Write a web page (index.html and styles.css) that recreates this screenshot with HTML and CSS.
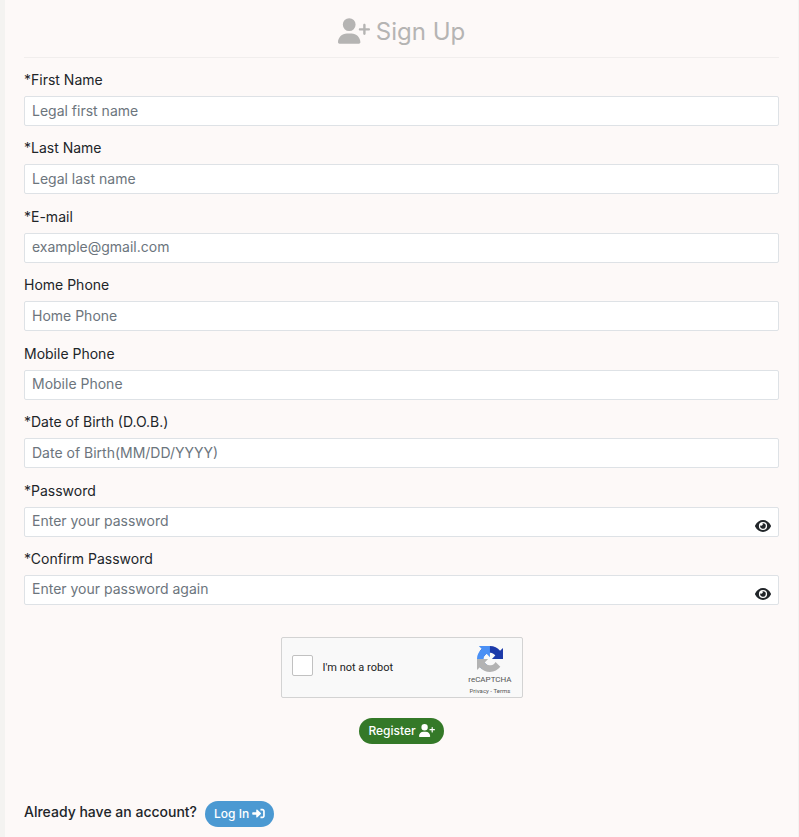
FILE: index.html
```html
<!DOCTYPE html>
<html lang="en">
<head>
  <meta charset="UTF-8">
  <meta name="viewport" content="width=device-width, initial-scale=1.0">
  <title>Sign Up</title>
  <link rel="stylesheet" href="styles.css">
</head>
<body>

  <!-- shared icons -->
  <svg class="sprite" aria-hidden="true">
    <symbol id="user-plus" viewBox="0 0 640 512">
      <path d="M96 128a128 128 0 1 1 256 0A128 128 0 1 1 96 128zM0 482.3C0 383.8 79.8 304 178.3 304h91.4C368.2 304 448 383.8 448 482.3c0 16.4-13.3 29.7-29.7 29.7H29.7C13.3 512 0 498.7 0 482.3zM504 312V248H440c-13.3 0-24-10.7-24-24s10.7-24 24-24h64V136c0-13.3 10.7-24 24-24s24 10.7 24 24v64h64c13.3 0 24 10.7 24 24s-10.7 24-24 24H552v64c0 13.3-10.7 24-24 24s-24-10.7-24-24z"/>
    </symbol>
    <symbol id="eye" viewBox="0 0 576 512">
      <path fill-rule="evenodd" d="M288 40C175 40 70 110 8 228c-10 18-10 38 0 56 62 118 167 188 280 188s218-70 280-188c10-18 10-38 0-56C506 110 401 40 288 40zm0 364a148 148 0 1 1 0-296 148 148 0 0 1 0 296z"/>
      <path d="M288 156a100 100 0 0 0-24 3 50 50 0 0 1-72 70 100 100 0 1 0 96-73z"/>
    </symbol>
  </svg>

  <main class="panel">
    <h1 class="title">
      <svg class="title-icon"><use href="#user-plus"/></svg>
      Sign Up
    </h1>

    <form class="form">
      <div class="fields">
        <div class="field">
          <label for="firstName">*First Name</label>
          <input type="text" id="firstName" placeholder="Legal first name">
        </div>
        <div class="field">
          <label for="lastName">*Last Name</label>
          <input type="text" id="lastName" placeholder="Legal last name">
        </div>
        <div class="field">
          <label for="email">*E-mail</label>
          <input type="email" id="email" placeholder="example@gmail.com">
        </div>
        <div class="field">
          <label for="homePhone">Home Phone</label>
          <input type="tel" id="homePhone" placeholder="Home Phone">
        </div>
        <div class="field">
          <label for="mobilePhone">Mobile Phone</label>
          <input type="tel" id="mobilePhone" placeholder="Mobile Phone">
        </div>
        <div class="field">
          <label for="dob">*Date of Birth (D.O.B.)</label>
          <input type="text" id="dob" placeholder="Date of Birth(MM/DD/YYYY)">
        </div>
        <div class="field">
          <label for="password">*Password</label>
          <input type="password" id="password" placeholder="Enter your password">
          <button type="button" class="toggle" aria-label="Show password"><svg><use href="#eye"/></svg></button>
        </div>
        <div class="field">
          <label for="confirm">*Confirm Password</label>
          <input type="password" id="confirm" placeholder="Enter your password again">
          <button type="button" class="toggle" aria-label="Show password"><svg><use href="#eye"/></svg></button>
        </div>
      </div>

      <div class="captcha">
        <input type="checkbox" id="robot">
        <label for="robot">I'm not a robot</label>
        <div class="captcha-brand">
          <svg class="captcha-logo" viewBox="0 0 64 64">
            <path fill="#1c3aa9" d="M64 31.955l-.033-1.37V4.687l-7.16 7.16C50.948 4.674 42.033.093 32.05.093c-10.4 0-19.622 4.96-25.458 12.64l11.736 11.86a15.55 15.55 0 0 1 4.754-5.334c2.05-1.6 4.952-2.906 8.968-2.906.485 0 .86.057 1.135.163 4.976.393 9.288 3.14 11.828 7.124l-8.307 8.307L64 31.953"/>
            <path fill="#4a90f5" d="M31.862.094l-1.37.033H4.594l7.16 7.16C4.58 13.147 0 22.06 0 32.046c0 10.4 4.96 19.622 12.64 25.458L24.5 45.768a15.55 15.55 0 0 1-5.334-4.754c-1.6-2.05-2.906-4.952-2.906-8.968 0-.485.057-.86.163-1.135.393-4.976 3.14-9.288 7.124-11.828l8.307 8.307L31.86.095"/>
            <path fill="#b3b3b3" d="M.001 32.045l.033 1.37v25.898l7.16-7.16c5.86 7.173 14.774 11.754 24.76 11.754 10.4 0 19.622-4.96 25.458-12.64l-11.736-11.86a15.55 15.55 0 0 1-4.754 5.334c-2.05 1.6-4.952 2.906-8.968 2.906-.485 0-.86-.057-1.135-.163-4.976-.393-9.288-3.14-11.828-7.124l8.307-8.307L0 32.045"/>
          </svg>
          <span class="captcha-name">reCAPTCHA</span>
          <span class="captcha-links"><a href="#">Privacy</a> - <a href="#">Terms</a></span>
        </div>
      </div>

      <button type="submit" class="pill register">
        Register
        <svg class="register-icon"><use href="#user-plus"/></svg>
      </button>
    </form>

    <div class="login">
      <span>Already have an account?</span>
      <a href="#" class="pill login-link">
        Log In
        <svg class="login-icon" viewBox="0 0 512 448">
          <path d="M336 32h80c53 0 96 43 96 96v192c0 53-43 96-96 96h-80v-68h72c22 0 36-14 36-36V136c0-22-14-36-36-36h-72z"/>
          <path d="M201 65l150 142c10 9 10 25 0 34L201 383c-15 14-37 5-37-17v-96H28c-16 0-28-12-28-28v-36c0-16 12-28 28-28h136V82c0-22 22-31 37-17z"/>
        </svg>
      </a>
    </div>
  </main>

</body>
</html>
```
FILE: styles.css
```css
* {
  box-sizing: border-box;
}
body {
  margin: 0;
  min-height: 100vh;
  display: flex;
  padding: 0 1px 0 5px;
  background-color: #f4f3f1;
  font-family: Inter, "Liberation Sans", sans-serif;
  font-size: 14px;
  color: #212529;
}
svg {
  fill: currentColor;
}
.sprite {
  display: none;
}
.panel {
  flex: 1;
  display: flex;
  flex-direction: column;
  padding: 6px 19px 10px;
  background-color: #fdf9f8;
}
.title {
  display: flex;
  align-items: center;
  justify-content: center;
  gap: 6px;
  height: 52px;
  margin: 0 0 12px;
  border-bottom: 1px solid #f1eeed;
  font-size: 24px;
  font-weight: 400;
  color: #b5b4b3;
}
.title-icon {
  width: 32px;
  height: 26px;
  margin-bottom: 2px;
}
.form {
  flex: 1;
  display: flex;
  flex-direction: column;
  align-items: center;
}
.fields {
  flex: 1;
  align-self: stretch;
  display: flex;
  flex-direction: column;
  justify-content: space-between;
}
.field {
  position: relative;
}
.field label {
  display: block;
  line-height: 20px;
  margin-bottom: 6px;
}
.field input {
  display: block;
  width: 100%;
  height: 30px;
  padding: 0 7px 2px;
  border: 1px solid #dee2e6;
  border-radius: 2px;
  background-color: #fff;
  font: inherit;
  color: #212529;
}
.field input::placeholder {
  color: #6c757d;
  opacity: 1;
}
/* eye button sits over the input */
.toggle {
  position: absolute;
  right: 8px;
  bottom: 3px;
  display: flex;
  padding: 0;
  border: none;
  background: none;
  color: #212529;
  cursor: pointer;
}
.toggle svg {
  width: 16px;
  height: 16px;
}
.captcha {
  display: flex;
  align-items: center;
  gap: 10px;
  width: 242px;
  height: 61px;
  margin: 32px 0 20px;
  padding: 0 10px;
  border: 1px solid #d3d3d3;
  border-radius: 2px;
  background-color: #f9f9f9;
  font-family: Roboto, sans-serif;
  font-size: 11px;
  color: #222;
}
.captcha input {
  appearance: none;
  width: 21px;
  height: 21px;
  margin: 0 0 4px;
  border: 1px solid #c1c1c1;
  border-radius: 2px;
  background-color: #fff;
}
.captcha-brand {
  display: flex;
  flex-direction: column;
  align-items: center;
  margin: 4px 0 0 auto;
  color: #555;
}
.captcha-logo {
  width: 26px;
  height: 26px;
}
.captcha-name {
  font-size: 8px;
  line-height: 16px;
}
.captcha-links {
  font-size: 6px;
  line-height: 6px;
}
.captcha-links a {
  color: inherit;
  text-decoration: none;
}
.pill {
  display: flex;
  align-items: center;
  gap: 3px;
  height: 26px;
  padding: 0 9px 1px;
  border: none;
  border-radius: 13px;
  font-family: inherit;
  font-size: 12px;
  font-weight: 500;
  color: #fff;
  text-decoration: none;
  cursor: pointer;
}
.register {
  background-color: #347928;
}
.register-icon {
  width: 16px;
  height: 13px;
}
.login {
  display: flex;
  align-items: flex-start;
  gap: 8px;
  margin-top: 57px;
  font-weight: 500;
  line-height: 22px;
}
.login-link {
  background-color: #4b99d2;
}
.login-icon {
  width: 13px;
  height: 11px;
}
```
